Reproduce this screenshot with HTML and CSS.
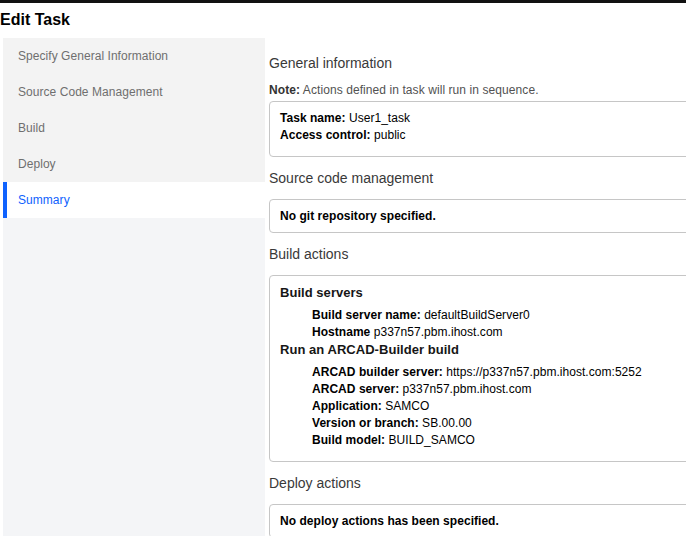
FILE: index.html
```html
<!DOCTYPE html>
<html lang="en">
<head>
<meta charset="utf-8">
<title>Edit Task</title>
<link rel="stylesheet" href="styles.css">
</head>
<body>
<div class="topbar"></div>
<h1 class="title">Edit Task</h1>
<div class="layout">
  <nav class="nav">
    <div class="nav-item">Specify General Information</div>
    <div class="nav-item">Source Code Management</div>
    <div class="nav-item">Build</div>
    <div class="nav-item">Deploy</div>
    <div class="nav-item nav-item--active">Summary</div>
  </nav>
  <main class="main">
    <section class="section section--first">
      <h2 class="section-title">General information</h2>
      <p class="note"><b>Note:</b> Actions defined in task will run in sequence.</p>
      <div class="box box--list">
        <div class="line"><b>Task name:</b> User1_task</div>
        <div class="line"><b>Access control:</b> public</div>
      </div>
    </section>
    <section class="section">
      <h2 class="section-title">Source code management</h2>
      <div class="box">
        <div class="line"><b>No git repository specified.</b></div>
      </div>
    </section>
    <section class="section">
      <h2 class="section-title">Build actions</h2>
      <div class="box box--list">
        <h3 class="group-title">Build servers</h3>
        <ul class="items">
          <li class="line"><b>Build server name:</b> defaultBuildServer0</li>
          <li class="line"><b>Hostname</b> p337n57.pbm.ihost.com</li>
        </ul>
        <h3 class="group-title">Run an ARCAD-Builder build</h3>
        <ul class="items">
          <li class="line"><b>ARCAD builder server:</b> https://p337n57.pbm.ihost.com:5252</li>
          <li class="line"><b>ARCAD server:</b> p337n57.pbm.ihost.com</li>
          <li class="line"><b>Application:</b> SAMCO</li>
          <li class="line"><b>Version or branch:</b> SB.00.00</li>
          <li class="line"><b>Build model:</b> BUILD_SAMCO</li>
        </ul>
      </div>
    </section>
    <section class="section">
      <h2 class="section-title">Deploy actions</h2>
      <div class="box">
        <div class="line"><b>No deploy actions has been specified.</b></div>
      </div>
    </section>
  </main>
</div>
</body>
</html>
```

FILE: styles.css
```css
html {
  overflow: hidden;
}

body {
  margin: 0;
  font-family: "Liberation Sans", Arial, sans-serif;
  background: #ffffff;
  color: #161616;
}

.topbar {
  height: 3px;
  background: #111111;
}

.title {
  margin: 0;
  padding: 6px 0 8px 0;
  font-size: 16px;
  line-height: 21px;
  font-weight: bold;
  color: #000000;
}

.layout {
  display: flex;
  align-items: stretch;
}

.nav {
  flex: 0 0 262px;
  margin-left: 3px;
  background: #f4f5f7;
  min-height: 520px;
}

.nav-item {
  height: 36px;
  line-height: 36px;
  padding-left: 15px;
  font-size: 12px;
  letter-spacing: 0.05px;
  color: #6f6f6f;
  background: #f3f3f3;
}

.nav-item--active {
  background: #ffffff;
  color: #0f62fe;
  box-shadow: inset 4px 0 0 #0f62fe;
}

.main {
  flex: 0 0 421px;
  margin-left: 4px;
  padding-top: 15px;
}

.section {
  margin-top: 11px;
}

.section--first {
  margin-top: 0;
}

.section-title {
  margin: 0 0 11px 0;
  font-size: 14px;
  line-height: 20px;
  font-weight: normal;
  color: #393939;
}

.section--first .section-title {
  margin-bottom: 10px;
}

.note {
  margin: 0 0 4px 0;
  font-size: 12px;
  line-height: 14px;
  letter-spacing: 0.08px;
  color: #525252;
}

.note b {
  color: #333333;
}

.box {
  border: 1px solid #c6c6c6;
  border-radius: 4px;
  padding: 8px 10px 7px 10px;
  font-size: 12px;
  letter-spacing: 0.04px;
  color: #000000;
}

.box--list {
  padding-bottom: 12px;
}

.line {
  line-height: 17px;
}

.group-title {
  margin: 0;
  font-size: 13px;
  line-height: 18px;
  font-weight: bold;
  color: #161616;
}

.items {
  list-style: none;
  margin: 5px 0 0 0;
  padding: 0 0 0 32px;
}
```
